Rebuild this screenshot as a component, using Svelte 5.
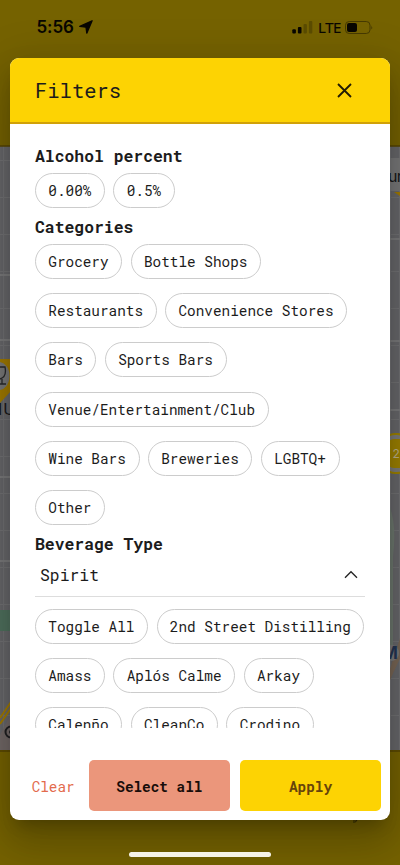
<script>
  const alcohol = ['0.00%', '0.5%'];
  const categories = ['Grocery', 'Bottle Shops', 'Restaurants', 'Convenience Stores', 'Bars', 'Sports Bars', 'Venue/Entertainment/Club', 'Wine Bars', 'Breweries', 'LGBTQ+', 'Other'];
  const spirits = ['Toggle All', '2nd Street Distilling', 'Amass', 'Aplós Calme', 'Arkay', 'Calenño', 'CleanCo', 'Crodino'];
</script>

{#snippet chips(items)}
  <div class="chips">
    {#each items as item}<button class="chip">{item}</button>{/each}
  </div>
{/snippet}

<div class="screen">
  <svg class="map" width="400" height="865" viewBox="0 0 400 865" aria-hidden="true">
    <defs>
      <pattern id="grid" width="9" height="37" patternUnits="userSpaceOnUse">
        <path d="M3.5 0V37M0 12.5H9" stroke="#717173" fill="none" />
      </pattern>
      <clipPath id="mapclip"><rect y="146" width="400" height="604" /></clipPath>
    </defs>
    <rect width="400" height="865" fill="#756200" />
    <g clip-path="url(#mapclip)">
      <rect y="146" width="400" height="604" fill="#67676a" />
      <rect y="146" width="400" height="604" fill="url(#grid)" />
      <path d="M0 275H10M0 340H10M0 477H10M0 561H10M390 239H400M390 341H400M390 410H400" stroke="#79797a" stroke-width="2" />
      <rect y="610" width="10" height="21" fill="#4f705d" />
      <path d="M0 359H11V391L0 403Z" fill="#a07a00" />
      <ellipse cx="-1" cy="376" rx="10.5" ry="14" fill="#787878" />
      <path d="M0 367H5Q7 377 0 379M2 379V384M-2 384H6" fill="none" stroke="#29292b" stroke-width="1.3" />
      <text x="-2" y="415" class="maptext">IU</text>
      <path d="M0 718L11 702M0 724L12 707" stroke="#a07a00" stroke-width="2" />
      <path d="M0 735L10 716V750H0Z" fill="#716866" />
      <circle cx="11" cy="732" r="5.5" fill="none" stroke="#202022" stroke-width="2" />
      <circle cx="11" cy="732" r="2" fill="#202022" />
      <rect x="385" y="158" width="20" height="33" fill="#777778" />
      <text x="388" y="182" class="maptext tight">ur</text>
      <path d="M394 192H400V196Z" fill="#a07a00" />
      <rect x="383" y="434" width="26" height="39" rx="12" fill="#7b7b7b" stroke="#9c8000" stroke-width="2" />
      <rect x="387" y="439" width="20" height="29" rx="7" fill="#9c8000" />
      <text x="392.5" y="458" class="num">2</text>
      <path d="M389 505Q397 524 393 557V650H389Z" fill="#6d776e" />
      <path d="M389 672L402 632V654L390 680Z" fill="#786655" />
      <circle cx="391" cy="653" r="8" fill="#7b7b7b" />
      <text x="382" y="659" class="m">M</text>
    </g>
    <path d="M0 146H400M0 751H400" stroke="#554400" stroke-width="1.5" />
    <path d="M353 820H357Q356 823 353 822" fill="none" stroke="#332900" />
  </svg>

  <header class="status">
    <span class="time">5:56</span>
    <svg class="loc" width="14" height="14" viewBox="0 0 14 14"><path d="M13.1.8 7.8 13.2 7 7.2.8 6.4Z" fill="#080600" stroke="#080600" stroke-width="1.3" stroke-linejoin="round" /></svg>
    <svg class="signal" width="21" height="13" viewBox="0 0 21 13"><rect x=".3" y="8.3" width="3.6" height="4.3" rx="1" fill="#080600" /><rect x="5.9" y="6" width="3.6" height="6.6" rx="1" fill="#080600" /><rect x="11.5" y="3" width="3.4" height="9.6" rx="1" fill="#5b4c00" /><rect x="16.9" y="0" width="3.4" height="12.6" rx="1" fill="#5b4c00" /></svg>
    <span class="lte">LTE</span>
    <svg class="battery" width="28" height="13" viewBox="0 0 28 13"><rect x=".5" y=".5" width="24.5" height="12" rx="3.7" fill="none" stroke="#463a00" /><rect x="2" y="2" width="10" height="9" rx="2" fill="#080600" /><path d="M26.3 4.5Q28 6.5 26.3 8.5Z" fill="#463a00" /></svg>
  </header>

  <main class="modal">
    <div class="heading">
      <h1>Filters</h1>
      <button class="close" aria-label="Close"><svg width="15" height="15" viewBox="0 0 15 15"><path d="m1 1 13 13M14 1 1 14" stroke="#211b04" stroke-width="1.8" /></svg></button>
    </div>
    <div class="content">
      <h2>Alcohol percent</h2>
      {@render chips(alcohol)}
      <h2>Categories</h2>
      {@render chips(categories)}
      <h2>Beverage Type</h2>
      <button class="accordion"><span>Spirit</span><svg width="14" height="9" viewBox="0 0 14 9"><path d="m1 7.7 6-6 6 6" fill="none" stroke="#222" stroke-width="1.3" /></svg></button>
      {@render chips(spirits)}
    </div>
    <footer>
      <button class="clear">Clear</button>
      <button class="select">Select all</button>
      <button class="apply">Apply</button>
    </footer>
  </main>
  <div class="home"></div>
</div>

<style>
  .screen { position: relative; width: 400px; height: 865px; overflow: hidden; font-family: "Roboto Mono", "Liberation Mono", monospace; color: #1c1c1c; }
  .map { position: absolute; inset: 0; }
  .maptext { font: 16px Inter, sans-serif; fill: #19191a; letter-spacing: 1px; }
  .tight { letter-spacing: -.6px; }
  .num { font: 12px Inter, sans-serif; fill: #bbb08a; }
  .m { font: bold 17px Inter, sans-serif; fill: #243552; }
  .status { position: relative; display: flex; align-items: center; height: 58.4px; box-sizing: border-box; padding: 0 27px 4px 36.5px; color: #080600; }
  .time { font: 600 17px/22px Inter, sans-serif; width: 38.5px; letter-spacing: -.1px; }
  .loc { margin-left: 4px; }
  .signal { margin-left: auto; }
  .lte { font: 400 15px/20px "Open Sans", sans-serif; width: 22px; margin: 0 5px 0 5px; letter-spacing: -.6px; -webkit-text-stroke: .2px; }
  .modal { position: relative; display: flex; flex-direction: column; width: 379.5px; height: 761.4px; margin-left: 10.3px; border-radius: 9px; background: #fff; box-shadow: 0 11px 15px -7px #0003, 0 24px 38px 3px #00000024, 0 9px 46px 8px #0000001f; }
  .heading { display: flex; align-items: center; justify-content: space-between; box-sizing: border-box; height: 65.6px; padding: 1px 37.8px 0 24.7px; background: #fdd303; border-bottom: 2px solid #d1a108; border-radius: 9px 9px 0 0; }
  h1, h2 { margin: 0; }
  h1 { font-size: 20.5px; font-weight: 400; line-height: 28px; }
  button { margin: 0; padding: 0; border: 0; background: none; font: inherit; color: inherit; }
  .close { display: flex; }
  .content { box-sizing: border-box; height: 604px; overflow: hidden; padding: 21px 24.5px 0 24.7px; }
  h2 { font-size: 16.4px; line-height: 22px; font-weight: 700; }
  .chips { display: flex; flex-wrap: wrap; gap: 14.2px 8.4px; margin: 6px 0 8.1px; }
  .chip { box-sizing: border-box; height: 35px; padding: 0 12.7px 0 12.3px; border: 1px solid #ccc; border-radius: 18px; font-size: 14.36px; white-space: nowrap; }
  .accordion { display: flex; align-items: center; justify-content: space-between; box-sizing: border-box; width: 100%; height: 41.6px; border-bottom: 1.4px solid #ddd; padding: 0 7px 1px 5px; font-size: 16.4px; margin-bottom: 12.4px; }
  footer { display: flex; align-items: center; gap: 10.2px; margin-top: 32.5px; padding-left: 21.3px; }
  footer button { height: 51px; width: 141px; padding-top: 1px; border-radius: 5px; font-size: 14.36px; font-weight: 700; }
  footer .clear { width: 43.2px; margin-right: 3.9px; font-weight: 400; color: #e36b4d; }
  .select { background: #eb967b; color: #190d0a; }
  .apply { background: #fdd303; color: #66430b; }
  .home { position: absolute; left: 129px; bottom: 8px; width: 142px; height: 5px; border-radius: 3px; background: #f5f2e8; }
</style>
